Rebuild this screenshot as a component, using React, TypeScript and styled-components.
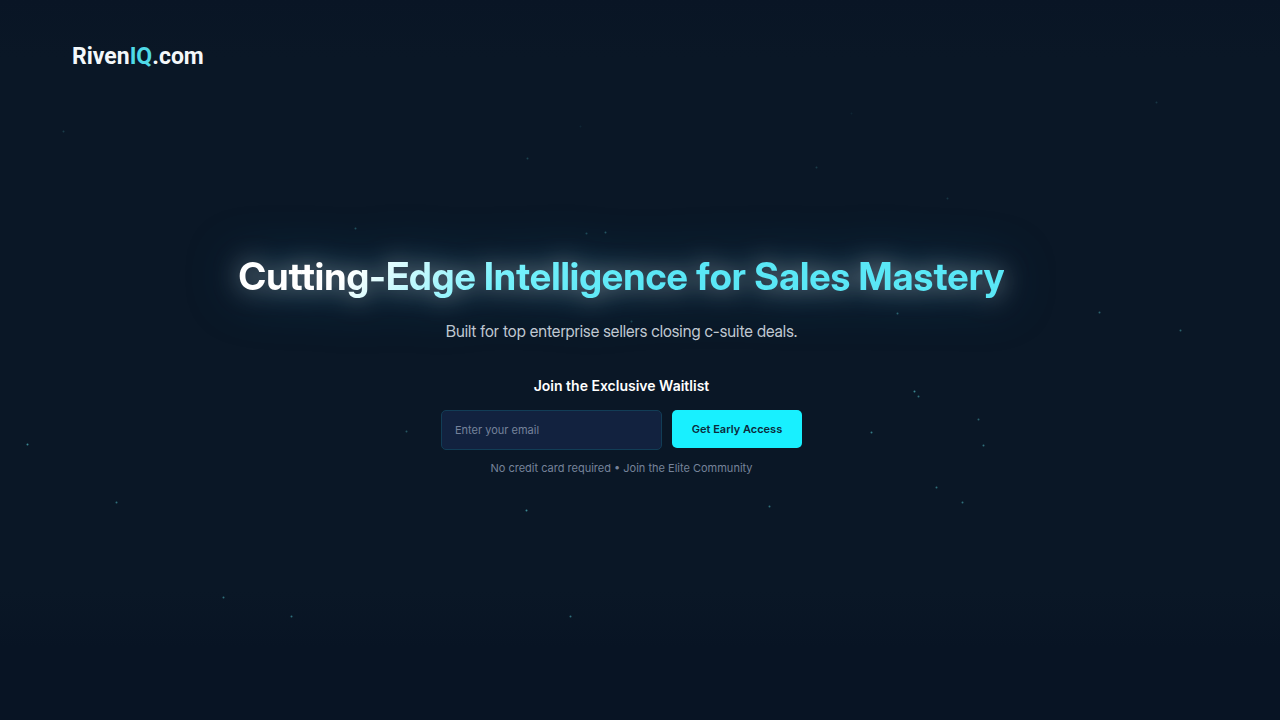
import React, { useState } from "react";
import styled, { createGlobalStyle } from "styled-components";

const GlobalStyle = createGlobalStyle`
  *, *::before, *::after { box-sizing: border-box; }
  body {
    margin: 0;
    background: #0a1726;
    color: #ffffff;
    font-family: Inter, "Liberation Sans", sans-serif;
    -webkit-font-smoothing: antialiased;
  }
`;

const Page = styled.div`
  position: relative;
  min-height: 100vh;
  display: flex;
  flex-direction: column;
  overflow: hidden;
  background: linear-gradient(#091525 0, #0a1726 8%, #0a1726 82%, #081424 90%);
`;

const StarField = styled.svg`
  position: absolute;
  inset: 0;
  width: 100%;
  height: 100%;
  pointer-events: none;
`;

const Header = styled.header`
  padding: 41px 72px 0;
`;

const Logo = styled.a`
  display: inline-block;
  font-family: Roboto, sans-serif;
  font-size: 23px;
  line-height: 32px;
  font-weight: 700;
  color: #f4f8fa;
  text-decoration: none;
`;

const LogoAccent = styled.span`
  color: #4fd9e6;
`;

const Hero = styled.main`
  display: flex;
  flex-direction: column;
  align-items: center;
  padding: 178px 37px 48px 0;
  text-align: center;
`;

const Title = styled.h1`
  margin: 0;
  font-family: "Inter Display", Inter, sans-serif;
  font-size: 38px;
  line-height: 50px;
  font-weight: 700;
  color: transparent;
  background: linear-gradient(135deg, #ffffff 16%, #74f0fb 36%, #5ae7f6 54%);
  background-clip: text;
  -webkit-background-clip: text;
  filter: drop-shadow(0 0 12px rgba(255, 235, 230, 0.5)) drop-shadow(0 0 24px rgba(0, 130, 180, 0.5));
`;

const Subtitle = styled.p`
  margin: 17px 0 0;
  font-family: "Inter Display", Inter, sans-serif;
  font-size: 16px;
  line-height: 26px;
  color: #c3cad3;
`;

const Waitlist = styled.form`
  display: flex;
  flex-direction: column;
  align-items: center;
  margin-top: 32px;
`;

const WaitlistLabel = styled.label`
  font-size: 14px;
  line-height: 20px;
  font-weight: 600;
`;

const FieldRow = styled.div`
  display: flex;
  align-items: flex-start;
  gap: 10px;
  margin-top: 14px;
`;

const EmailInput = styled.input`
  width: 221px;
  height: 40px;
  padding: 0 13px;
  border: 1px solid #123d56;
  border-radius: 5px;
  background: #12223f;
  color: #ffffff;
  font: 400 11px/16px Inter, sans-serif;
  &::placeholder { color: #75829b; opacity: 1; }
`;

const SubmitButton = styled.button`
  width: 130px;
  height: 38px;
  padding: 0;
  border: 0;
  border-radius: 5px;
  background: #18f0ff;
  color: #0b2a3b;
  font: 600 11px/16px Inter, sans-serif;
  cursor: pointer;
`;

const Note = styled.p`
  margin: 10px 0 0;
  font-size: 11px;
  line-height: 16px;
  color: #76839a;
`;

type Star = [x: number, y: number, opacity: number];

const stars: Star[] = [
  [63, 131, 0.3], [527, 158, 0.35], [580, 126, 0.12], [816, 167, 0.3],
  [851, 113, 0.12], [1156, 102, 0.25], [947, 198, 0.25], [355, 228, 0.45],
  [586, 233, 0.4], [605, 232, 0.5], [631, 321, 0.4], [897, 313, 0.6],
  [1099, 312, 0.6], [1180, 330, 0.6], [914, 391, 0.9], [918, 396, 0.7],
  [978, 419, 0.6], [871, 432, 0.8], [983, 445, 0.7], [936, 487, 0.7],
  [962, 502, 0.7], [769, 506, 0.7], [526, 510, 0.9], [406, 431, 0.5],
  [27, 444, 0.9], [116, 502, 0.7], [223, 597, 0.7], [291, 616, 0.7],
  [570, 616, 0.7],
];

export default function App() {
  const [email, setEmail] = useState("");

  return (
    <>
      <GlobalStyle />
      <Page>
        <StarField aria-hidden="true">
          {stars.map(([x, y, opacity]) => (
            <circle key={`${x}-${y}`} cx={`${(x + 0.5) / 12.8}%`} cy={`${(y + 0.5) / 7.2}%`} r="1" fill="#4fb6be" opacity={opacity * 0.8} />
          ))}
        </StarField>
        <Header>
          <Logo href="#">
            Riven<LogoAccent>IQ</LogoAccent>.com
          </Logo>
        </Header>
        <Hero>
          <Title>Cutting-Edge Intelligence for Sales Mastery</Title>
          <Subtitle>Built for top enterprise sellers closing c-suite deals.</Subtitle>
          <Waitlist onSubmit={(event) => event.preventDefault()}>
            <WaitlistLabel htmlFor="email">Join the Exclusive Waitlist</WaitlistLabel>
            <FieldRow>
              <EmailInput
                id="email"
                type="email"
                placeholder="Enter your email"
                value={email}
                onChange={(event) => setEmail(event.target.value)}
              />
              <SubmitButton type="submit">Get Early Access</SubmitButton>
            </FieldRow>
            <Note>No credit card required • Join the Elite Community</Note>
          </Waitlist>
        </Hero>
      </Page>
    </>
  );
}
